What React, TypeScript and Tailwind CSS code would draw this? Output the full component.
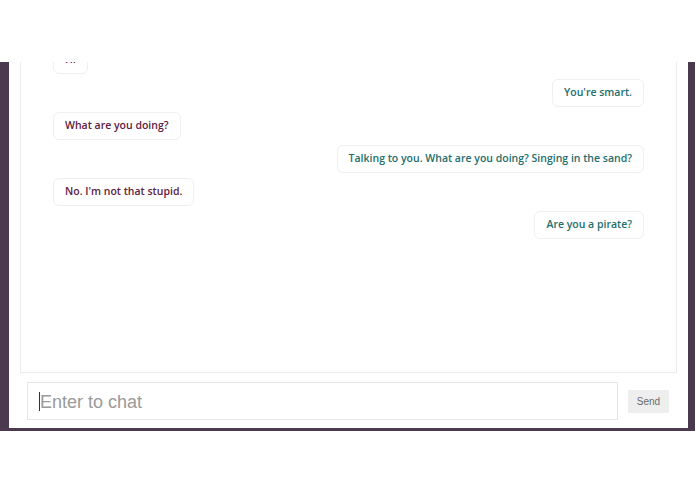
const messages = [
  { id: 1, text: 'Hi', mine: false },
  { id: 2, text: "You're smart.", mine: true },
  { id: 3, text: 'What are you doing?', mine: false },
  { id: 4, text: 'Talking to you. What are you doing? Singing in the sand?', mine: true },
  { id: 5, text: "No. I'm not that stupid.", mine: false },
  { id: 6, text: 'Are you a pirate?', mine: true },
]

export default function App() {
  return (
    <div className="w-[695px] h-[494px] bg-white flex flex-col overflow-hidden font-['Liberation_Sans',Arial,sans-serif]">
      <div className="h-[62px] shrink-0 bg-white" />
      <div className="h-[369px] shrink-0 bg-[#4b3a4f] pl-[9px] pr-[7px] pb-[3px] flex">
        <div className="flex-1 bg-white flex flex-col px-[11px] pb-[8px]">
          <div className="h-[311px] border border-t-0 border-[#ececec] overflow-hidden px-[32px]">
            <div className="-mt-[16px] flex flex-col gap-[5px]">
              {messages.map((m) => (
                <div key={m.id} className={m.mine ? 'flex justify-end' : 'flex justify-start'}>
                  <div
                    className={
                      'h-[28px] flex items-center px-[11px] rounded-[6px] border border-[#efefef] bg-white text-[10.5px] font-semibold font-["Open_Sans",sans-serif] ' +
                      (m.mine ? 'text-[#236e6c]' : 'text-[#5e2141]')
                    }
                  >
                    {m.text}
                  </div>
                </div>
              ))}
            </div>
          </div>
          <div className="mt-[9px] flex items-center pl-[7px] gap-[10px]">
            <div className="relative w-[591px] h-[38px]">
              <input
                className="w-full h-full border border-[#e6e6e6] bg-white pl-[12px] pt-[2px] text-[18px] text-[#333] placeholder:text-[#9a9a9a] outline-none"
                placeholder="Enter to chat"
              />
              <span className="absolute left-[12px] top-[10px] w-px h-[19px] bg-[#333]" />
            </div>
            <button className="w-[41px] h-[23px] bg-[#eeeeee] text-[10px] text-[#6a6a6a]">Send</button>
          </div>
        </div>
      </div>
      <div className="flex-1 bg-white" />
    </div>
  )
}
